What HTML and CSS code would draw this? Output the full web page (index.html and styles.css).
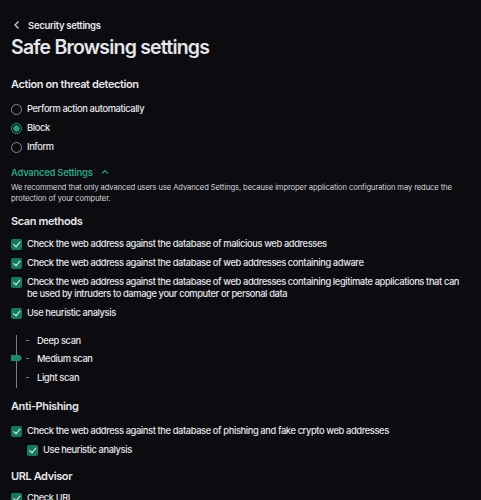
FILE: index.html
```html
<!DOCTYPE html>
<html lang="en">
<head>
<meta charset="utf-8">
<title>Safe Browsing settings</title>
<link rel="stylesheet" href="styles.css">
</head>
<body>
<main class="page">
  <a class="back" href="#">
    <svg class="back-icon" width="8" height="10" viewBox="0 0 8 10"><path d="M5.5 1.5 L2 5 L5.5 8.5" fill="none" stroke="#cfcfd4" stroke-width="1.3"/></svg>
    <span>Security settings</span>
  </a>
  <h1 class="title">Safe Browsing settings</h1>

  <h2 class="section section-first">Action on threat detection</h2>
  <div class="options">
    <label class="row"><span class="radio"></span><span>Perform action automatically</span></label>
    <label class="row"><span class="radio radio-on"></span><span>Block</span></label>
    <label class="row"><span class="radio"></span><span>Inform</span></label>
  </div>

  <div class="advanced">
    <span>Advanced Settings</span>
    <svg width="8" height="6" viewBox="0 0 8 6"><path d="M1 4.5 L4 1.5 L7 4.5" fill="none" stroke="#24a381" stroke-width="1.2"/></svg>
  </div>
  <p class="note">We recommend that only advanced users use Advanced Settings, because improper application configuration may reduce the protection of your computer.</p>

  <h2 class="section section-scan">Scan methods</h2>
  <div class="checks">
    <label class="row"><span class="check"></span><span>Check the web address against the database of malicious web addresses</span></label>
    <label class="row"><span class="check"></span><span>Check the web address against the database of web addresses containing adware</span></label>
    <label class="row"><span class="check"></span><span>Check the web address against the database of web addresses containing legitimate applications that can be used by intruders to damage your computer or personal data</span></label>
    <label class="row"><span class="check"></span><span>Use heuristic analysis</span></label>
  </div>

  <div class="slider">
    <div class="track">
      <span class="thumb"></span>
    </div>
    <div class="levels">
      <div class="level"><span class="tick"></span><span>Deep scan</span></div>
      <div class="level"><span class="tick"></span><span>Medium scan</span></div>
      <div class="level"><span class="tick"></span><span>Light scan</span></div>
    </div>
  </div>

  <h2 class="section section-after-slider">Anti-Phishing</h2>
  <div class="checks checks-phish">
    <label class="row"><span class="check"></span><span>Check the web address against the database of phishing and fake crypto web addresses</span></label>
    <label class="row row-nested"><span class="check"></span><span>Use heuristic analysis</span></label>
  </div>

  <h2 class="section section-url">URL Advisor</h2>
  <div class="checks checks-url">
    <label class="row"><span class="check"></span><span>Check URL</span></label>
  </div>
</main>
</body>
</html>
```

FILE: styles.css
```css
* { box-sizing: border-box; }

html, body {
  margin: 0;
  height: 100%;
  background: #0b0b10;
  overflow: hidden;
}

body {
  font-family: "Inter", "Noto Sans", sans-serif;
  color: #e6e6ea;
}

.page {
  padding: 18px 13px 0 11px;
  display: flex;
  flex-direction: column;
}

.back {
  display: flex;
  align-items: center;
  gap: 7px;
  height: 14px;
  padding-left: 2px;
  color: #e6e6ea;
  text-decoration: none;
  font-size: 9.5px;
  font-weight: 600;
  letter-spacing: -0.3px;
}

.title {
  margin: 3px 0 0 0;
  font-size: 19.5px;
  line-height: 24px;
  font-weight: 600;
  letter-spacing: -0.8px;
}

.section {
  margin: 15px 0 0 0;
  font-size: 11px;
  line-height: 16px;
  font-weight: 600;
  letter-spacing: -0.4px;
}

.section-first { margin-top: 17px; }
.section-scan { margin-top: 9px; }
.section-after-slider { margin-top: 10px; }
.section-url { margin-top: 12px; }

.options {
  display: flex;
  flex-direction: column;
  gap: 7px;
  margin-top: 11px;
}

.row {
  display: flex;
  align-items: flex-start;
  gap: 5px;
  font-size: 9.3px;
  line-height: 12px;
  font-weight: 500;
  letter-spacing: -0.38px;
}

.radio {
  flex: none;
  width: 11px;
  height: 11px;
  margin-top: 0.5px;
  border-radius: 50%;
  border: 1px solid #8a8a92;
}

.radio-on {
  border-color: #1e9c7b;
  background: radial-gradient(circle, #1e9c7b 0 3px, transparent 3.5px);
}

.advanced {
  display: flex;
  align-items: center;
  gap: 8px;
  margin-top: 12px;
  height: 14px;
  color: #24a381;
  font-size: 9.5px;
  font-weight: 600;
  letter-spacing: -0.3px;
}

.note {
  margin: 3px 0 0 0;
  font-size: 7.6px;
  line-height: 11px;
  color: #d6d6da;
  letter-spacing: -0.1px;
  max-width: 458px;
}

.checks {
  display: flex;
  flex-direction: column;
  gap: 7px;
  margin-top: 9px;
}

.checks-phish { margin-top: 11px; }
.checks-url { margin-top: 8px; }

.check {
  flex: none;
  position: relative;
  width: 11px;
  height: 11px;
  margin-top: 0.5px;
  border-radius: 2px;
  background: #137a60;
}

.check::after {
  content: "";
  position: absolute;
  left: 3.5px;
  top: 1.5px;
  width: 3px;
  height: 5.5px;
  border-right: 1.4px solid #f2f2f2;
  border-bottom: 1.4px solid #f2f2f2;
  transform: rotate(40deg);
}

.row-nested { padding-left: 16px; }

.slider {
  display: flex;
  margin-top: 15px;
}

.track {
  position: relative;
  width: 15px;
  height: 53px;
  margin-top: 1px;
}

.track::before {
  content: "";
  position: absolute;
  left: 5px;
  top: 0;
  bottom: 0;
  width: 1px;
  background: #7b7b84;
}

.thumb {
  position: absolute;
  left: 0;
  top: 20px;
  width: 11px;
  height: 6px;
  background: #1a8c6e;
  clip-path: polygon(0 0, 80% 0, 100% 50%, 80% 100%, 0 100%);
}

.levels {
  display: flex;
  flex-direction: column;
  gap: 6.5px;
}

.level {
  display: flex;
  align-items: center;
  gap: 8px;
  height: 12px;
  font-size: 9.3px;
  font-weight: 500;
  letter-spacing: -0.38px;
}

.tick {
  width: 3px;
  height: 1px;
  background: #7b7b84;
}
```
